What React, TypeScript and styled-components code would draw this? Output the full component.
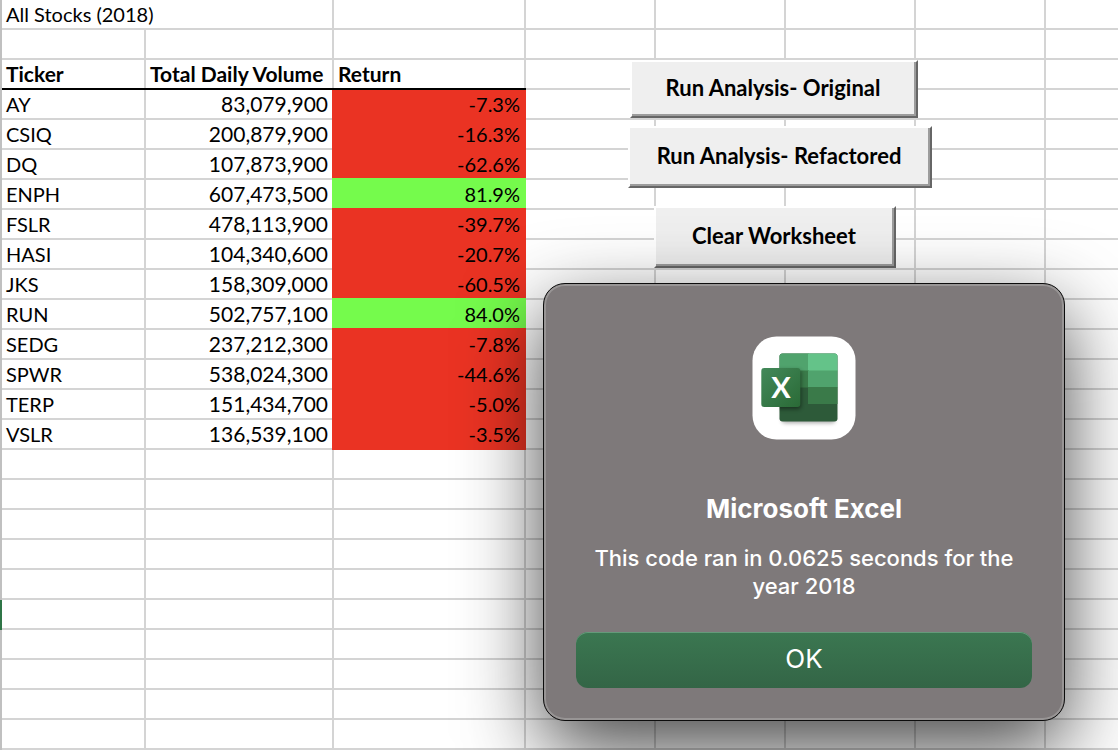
import React from "react";
import styled, { createGlobalStyle } from "styled-components";

const GlobalStyle = createGlobalStyle`
  *, *::before, *::after { box-sizing: border-box; }
  body { margin: 0; background: #fff; overflow: hidden; }
`;

const RED = "#ea3323";
const GREEN = "#75fb4c";

const Sheet = styled.main`
  position: relative;
  width: 100%;
  color: #000;
  font-family: Lato, "Liberation Sans", sans-serif;
`;

const Grid = styled.table`
  width: 100%;
  table-layout: fixed;
  border-collapse: separate;
  border-spacing: 0;
  border-left: 2px solid #c0c0c0;
  font-size: 20px;
  line-height: 28px;
`;

const Column = styled.col<{ $width?: number }>`
  width: ${(p) => (p.$width ? `${p.$width}px` : "auto")};
`;

const Cell = styled.td<{ $active?: boolean }>`
  height: 30px;
  padding: 0 4px;
  border-right: 2px solid #d4d4d4;
  border-bottom: 2px solid #d4d4d4;
  text-align: left;
  white-space: nowrap;
  box-shadow: ${(p) => (p.$active ? "-2px 0 0 #2f7547" : "none")};

  &:last-child {
    border-right: 0;
  }
`;

const HeadCell = styled(Cell)`
  font-size: 21px;
  font-weight: 700;
`;

const TickerCell = styled(Cell)`
  tr:first-child > & {
    box-shadow: 0 -2px 0 #000;
  }
`;

const VolumeCell = styled(TickerCell)`
  font-size: 21px;
  text-align: right;
`;

const ReturnCell = styled(Cell)<{ $fill: string }>`
  background: ${(p) => p.$fill};
  border-color: ${(p) => p.$fill};
  box-shadow: -2px 0 0 ${(p) => p.$fill}, 0 -2px 0 ${(p) => p.$fill}, -2px -2px 0 ${(p) => p.$fill};
  text-align: right;

  tr:first-child > & {
    box-shadow: -2px 0 0 ${(p) => p.$fill}, 0 -2px 0 #000;
  }
`;

const MacroButton = styled.button<{ $x: number; $y: number; $w: number; $h: number }>`
  position: absolute;
  left: ${(p) => p.$x}px;
  top: ${(p) => p.$y}px;
  width: ${(p) => p.$w}px;
  height: ${(p) => p.$h}px;
  padding: 0 2px 2px 0;
  border: 2px solid;
  border-color: #fff #666 #666 #fff;
  box-shadow: inset -2px -2px 0 #9c9c9c;
  background: #efefef;
  color: #000;
  font: 700 22px/28px Lato, "Liberation Sans", sans-serif;
  white-space: nowrap;
`;

const Dialog = styled.section`
  position: absolute;
  left: 543px;
  top: 283px;
  width: 522px;
  display: flex;
  flex-direction: column;
  align-items: center;
  padding: 52px 32px 32px;
  border: 1px solid #0c0c0c;
  border-radius: 22px;
  background: #7e797a;
  box-shadow: inset 0 0 0 2px #989595, 0 28px 80px rgba(0, 0, 0, 0.72);
  color: #fff;
  font-family: Inter, "Liberation Sans", sans-serif;
  text-align: center;
`;

const Title = styled.h1`
  margin: 53px 0 0;
  font-size: 26px;
  line-height: 32px;
  font-weight: 700;
`;

const Message = styled.p`
  width: 430px;
  margin: 19px 0 32px;
  font-size: 22px;
  line-height: 28px;
  font-weight: 500;
`;

const OkButton = styled.button`
  width: 100%;
  height: 56px;
  padding: 0 0 2px;
  border: 0;
  border-radius: 12px;
  background: linear-gradient(#3b7751, #336546);
  box-shadow: inset 0 1px 0 #649a7a;
  color: #fff;
  font: 400 26px/32px Inter, "Liberation Sans", sans-serif;
`;

const ExcelIcon = () => (
  <svg width="104" height="104" viewBox="0 0 104 104" aria-hidden="true">
    <defs>
      <linearGradient id="badge" x1="0" y1="0" x2="1" y2="1">
        <stop offset="0" stopColor="#43895a" />
        <stop offset="1" stopColor="#2a6a36" />
      </linearGradient>
      <clipPath id="book">
        <rect x="27.5" y="17.5" width="58" height="68" rx="3" />
      </clipPath>
      <filter id="soft" x="-30%" y="-30%" width="160%" height="160%">
        <feGaussianBlur stdDeviation="2" />
      </filter>
    </defs>
    <rect x="0.5" y="0.5" width="103" height="103" rx="24" fill="#fff" />
    <rect x="30" y="22" width="53" height="65" rx="3" fill="#000" opacity="0.35" filter="url(#soft)" />
    <g clipPath="url(#book)">
      <rect x="27" y="17" width="59" height="69" fill="#2d5a39" />
      <rect x="27" y="17" width="30" height="18" fill="#50a36d" />
      <rect x="56" y="17" width="30" height="18" fill="#64c389" />
      <rect x="27" y="34.5" width="30" height="17" fill="#3a7a49" />
      <rect x="56" y="34.5" width="30" height="17" fill="#50a36d" />
      <rect x="56" y="51" width="30" height="17" fill="#3a7a49" />
      <rect x="11" y="34" width="38" height="39" rx="3" fill="#000" opacity="0.45" filter="url(#soft)" />
    </g>
    <rect x="9.3" y="32" width="39" height="39" rx="3" fill="url(#badge)" />
    <text x="29" y="62" textAnchor="middle" fill="#fff" fontFamily="Lato, sans-serif" fontSize="29" fontWeight="700">
      X
    </text>
  </svg>
);

const COLUMN_WIDTHS = [144, 188, 192, 130, 130, 130, 130];
const ROW_COUNT = 25;
const ACTIVE_ROW = 20;

const STOCKS: [string, string, number][] = [
  ["AY", "83,079,900", -7.3],
  ["CSIQ", "200,879,900", -16.3],
  ["DQ", "107,873,900", -62.6],
  ["ENPH", "607,473,500", 81.9],
  ["FSLR", "478,113,900", -39.7],
  ["HASI", "104,340,600", -20.7],
  ["JKS", "158,309,000", -60.5],
  ["RUN", "502,757,100", 84.0],
  ["SEDG", "237,212,300", -7.8],
  ["SPWR", "538,024,300", -44.6],
  ["TERP", "151,434,700", -5.0],
  ["VSLR", "136,539,100", -3.5],
];

const EmptyCells = ({ count, active }: { count: number; active?: boolean }) => (
  <>
    {Array.from({ length: count }, (_, i) => (
      <Cell key={i} $active={active && i === 0} />
    ))}
  </>
);

const blankRows = ROW_COUNT - 3 - STOCKS.length;

export default function App() {
  return (
    <>
      <GlobalStyle />
      <Sheet>
        <Grid>
          <colgroup>
            {COLUMN_WIDTHS.map((w, i) => (
              <Column key={i} $width={w} />
            ))}
            <Column />
          </colgroup>
          <thead>
            <tr>
              <Cell colSpan={2}>All Stocks (2018)</Cell>
              <EmptyCells count={6} />
            </tr>
            <tr>
              <EmptyCells count={8} />
            </tr>
            <tr>
              <HeadCell as="th" scope="col">Ticker</HeadCell>
              <HeadCell as="th" scope="col">Total Daily Volume</HeadCell>
              <HeadCell as="th" scope="col">Return</HeadCell>
              <EmptyCells count={5} />
            </tr>
          </thead>
          <tbody>
            {STOCKS.map(([ticker, volume, change]) => (
              <tr key={ticker}>
                <TickerCell>{ticker}</TickerCell>
                <VolumeCell>{volume}</VolumeCell>
                <ReturnCell $fill={change > 0 ? GREEN : RED}>{change.toFixed(1)}%</ReturnCell>
                <EmptyCells count={5} />
              </tr>
            ))}
            {Array.from({ length: blankRows }, (_, i) => (
              <tr key={i}>
                <EmptyCells count={8} active={i + 3 + STOCKS.length === ACTIVE_ROW} />
              </tr>
            ))}
          </tbody>
        </Grid>
        <MacroButton type="button" $x={630} $y={60} $w={288} $h={58}>Run Analysis- Original</MacroButton>
        <MacroButton type="button" $x={628} $y={126} $w={304} $h={62}>Run Analysis- Refactored</MacroButton>
        <MacroButton type="button" $x={654} $y={206} $w={242} $h={62}>Clear Worksheet</MacroButton>
        <Dialog role="alertdialog" aria-labelledby="alert-title" aria-describedby="alert-message">
          <ExcelIcon />
          <Title id="alert-title">Microsoft Excel</Title>
          <Message id="alert-message">This code ran in 0.0625 seconds for the year 2018</Message>
          <OkButton type="button">OK</OkButton>
        </Dialog>
      </Sheet>
    </>
  );
}
